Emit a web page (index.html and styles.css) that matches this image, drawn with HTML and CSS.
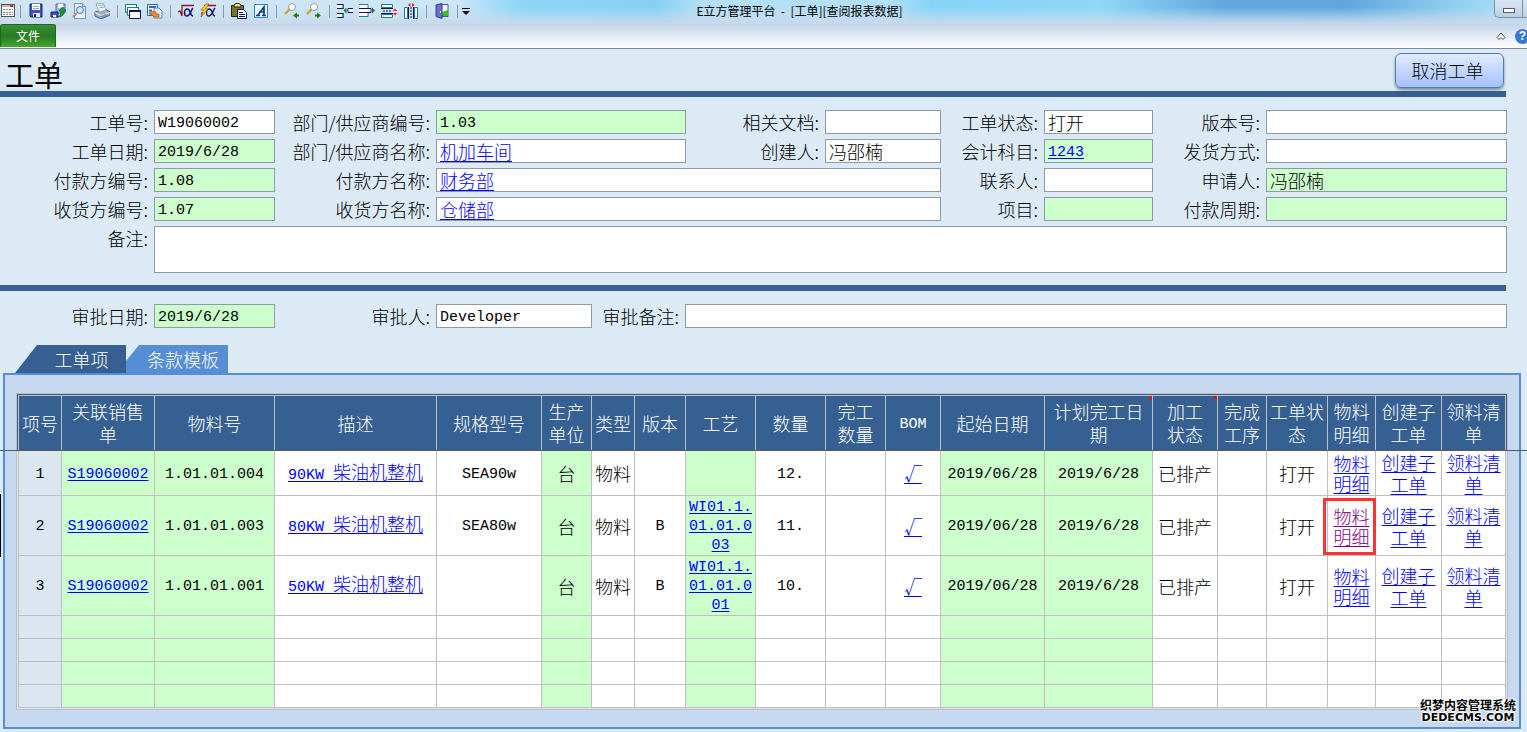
FILE: index.html
```
<!DOCTYPE html>
<html lang="zh-CN">
<head>
    <meta charset="UTF-8">
    <meta name="viewport" content="width=device-width, initial-scale=1.0">
    <title>E立方管理平台</title>
    <link rel="stylesheet" href="styles.css">
</head>
<body>

<header class="titlebar">
    <div class="toolbar">
        <button class="tool first" title="窗口"><svg width="16" height="16" viewBox="0 0 16 16"><rect x="1.500" y="1.500" width="13" height="12" fill="#fff" stroke="#555"/><path d="M2 3h12" stroke="#bbb" stroke-width="2"/><path d="M10 3h3" stroke="#b33" stroke-width="2"/><path d="M3 6.500h10M3 9.500h10M3 11.500h10" stroke="#888" stroke-dasharray="2 1"/></svg></button>
        <i class="sep"></i>
        <button class="tool" title="保存"><svg width="16" height="16" viewBox="0 0 16 16"><path d="M2 1h12v13H3l-1-1z" fill="#3d50c4" stroke="#1b2477"/><path d="M4 1h8v6H4z" fill="#fff"/><path d="M5 3.500h6M5 5.500h6" stroke="#9aa"/><path d="M5 10h7v4H5z" fill="#e4e8f4"/><path d="M6 11h2v3H6z" fill="#1b2477"/></svg></button>
        <button class="tool" title="保存并退出"><svg width="16" height="16" viewBox="0 0 16 16"><path d="M6 1h9v9H6z" fill="#9db4e4" stroke="#5069a8"/><path d="M8 1h5v4H8z" fill="#fff"/><path d="M1 9h7v5H1z" fill="#3d50c4" stroke="#1b2477"/><path d="M3 12h3v2H3z" fill="#fff"/><path d="M7 14c3 0 4-3 4-6H9l3.500-4L16 8h-2c0 4-2 6-7 6z" fill="#15a02a" stroke="#075c12" stroke-width=".7"/></svg></button>
        <button class="tool" title="打印预览"><svg width="16" height="16" viewBox="0 0 16 16"><path d="M2.500.5h8l3 3v12h-11z" fill="#eef5ff" stroke="#6d93d0"/><path d="M10.500.5v3h3" fill="#bcd3f2" stroke="#6d93d0"/><circle cx="8" cy="7" r="3.500" fill="#cfeaff" stroke="#3975b8"/><path d="M5 10l-4 4" stroke="#c78a5a" stroke-width="2"/></svg></button>
        <button class="tool" title="打印"><svg width="16" height="16" viewBox="0 0 16 16"><path d="M1 9l10-3 5 3v3l-9 4-6-3z" fill="#a9adb5" stroke="#555c66"/><path d="M2 1l7-1 3 7-7 2z" fill="#fff" stroke="#8aa"/><path d="M4 3l5-1M5 5l5-1" stroke="#77a2dd"/><path d="M1 9.500l6 3 9-3" fill="none" stroke="#eee"/><path d="M5 14l6-3 3 1-6 3z" fill="#5f9bea"/></svg></button>
        <i class="sep"></i>
        <button class="tool" title="层叠"><svg width="16" height="16" viewBox="0 0 16 16"><g fill="#fff"><path d="M.5 1.500h11v8H.5z" stroke="#188080"/><path d="M2.500 4.500h11v8h-11z" stroke="#188080"/><path d="M4.500 7.500h11v8h-11z" stroke="#10106c"/></g><path d="M0 1.500h12M2 4.500h12" stroke="#188080"/><path d="M4 8h12" stroke="#10106c" stroke-width="2"/></svg></button>
        <button class="tool" title="切换"><svg width="16" height="16" viewBox="0 0 16 16"><path d="M.5 1.500h10v11H.5z" fill="#fff" stroke="#2862ba"/><path d="M2 4h7" stroke="#2862ba" stroke-width="2"/><path d="M2 7.500h3M2 10.500h3" stroke="#2862ba" stroke-width="2"/><path d="M7 5h5l3 3v7H7z" fill="#dbe9ff" stroke="#6482bb"/><path d="M3 8l6 1v2h3v3H7l-4-4z" fill="#f18a20" stroke="#b75306" stroke-width=".6"/></svg></button>
        <i class="sep"></i>
        <button class="tool" title="公式"><svg width="16" height="16" viewBox="0 0 16 16"><path d="M0 9l2-1 2 5V2.500h12" fill="none" stroke="#8c1c1c" stroke-width="1.300"/><path d="M15 5c-2 2-3 8-6 8-2 0-2.500-2-2.500-3.500S7.500 6 9.500 6c3 0 2.500 7 5.500 7" fill="none" stroke="#12127a" stroke-width="1.500"/></svg></button>
        <button class="tool" title="执行公式"><svg width="16" height="16" viewBox="0 0 16 16"><path d="M4 2.500h12M2 12V9" fill="none" stroke="#8c1c1c" stroke-width="1.300"/><path d="M15 5c-2 2-3 8-6 8-2 0-2.500-2-2.500-3.500S7.500 6 9.500 6c3 0 2.500 7 5.500 7" fill="none" stroke="#12127a" stroke-width="1.300"/><path d="M6 1L1 7h3l-3 7 7-8H5l4-5z" fill="#ffe719" stroke="#8f4c10" stroke-width=".7"/></svg></button>
        <i class="sep"></i>
        <button class="tool" title="粘贴"><svg width="16" height="16" viewBox="0 0 16 16"><path d="M.5 2.500h12v11H.5z" fill="#77772a" stroke="#222"/><path d="M3 4h7V2L8 .5H5L3 2z" fill="#ffe65c" stroke="#222"/><path d="M6.500 6.500h6l3 3v6h-9z" fill="#fff" stroke="#10106c"/><path d="M8 9.500h4M8 11.500h6M8 13.500h6" stroke="#10106c"/></svg></button>
        <button class="tool" title="字体"><svg width="16" height="16" viewBox="0 0 16 16"><path d="M1.500 1.500h13v13h-13z" fill="#e8f7ff" stroke="#2589ce"/><path d="M3 12.500h4M9 12.500h4M5 12l6-8v8M6 9h5" fill="none" stroke="#173b79" stroke-width="1.700"/></svg></button>
        <i class="sep"></i>
        <button class="tool" title="查找上一个"><svg width="16" height="16" viewBox="0 0 16 16"><path d="M1 11l5-5" stroke="#c3a000" stroke-width="2"/><circle cx="8" cy="4" r="3.500" fill="#fff" stroke="#999"/><path d="M9 12.500l4-3v2h2v2h-2v2z" fill="#128012"/></svg></button>
        <button class="tool" title="查找下一个"><svg width="16" height="16" viewBox="0 0 16 16"><path d="M1 11l5-5" stroke="#c3a000" stroke-width="2"/><circle cx="8" cy="4" r="3.500" fill="#fff" stroke="#999"/><path d="M15 12.500l-4-3v2H9v2h2v2z" fill="#128012"/></svg></button>
        <i class="sep"></i>
        <button class="tool" title="插入行"><svg width="16" height="16" viewBox="0 0 16 16"><g fill="#fff" stroke="#10106c"><path d="M0 1.500h6v4H0M0 10.500h6v4H0"/><path d="M16 5.500h-5v4h5"/></g><path d="M6.500 7.500l3-3v6z" fill="#178017"/><path d="M6.500 1v5M6.500 10v5" stroke="#188080"/></svg></button>
        <button class="tool" title="删除行"><svg width="16" height="16" viewBox="0 0 16 16"><g fill="#fff" stroke="#188080"><path d="M0 1.500h9v4H0M0 9.500h9v4H0"/></g><path d="M0 5.500h12v4H0" fill="#fff" stroke="#10106c"/><path d="M16 7.500l-3-3v6z" fill="#178017"/></svg></button>
        <button class="tool" title="行高"><svg width="16" height="16" viewBox="0 0 16 16"><path d="M.5 1.500h11v3H.5zM.5 11.500h11v3H.5z" fill="#fff" stroke="#188080"/><path d="M0 5.500h12M0 10.500h12" stroke="#10106c"/><path d="M2 8h9" stroke="#10106c" stroke-dasharray="2 1"/><path d="M12 8l2-2.500L16 8zM12 10l2 2.500 2-2.500z" fill="#f11"/></svg></button>
        <button class="tool" title="列宽"><svg width="16" height="16" viewBox="0 0 16 16"><path d="M1.500 4.500h3v11h-3zM11.500 4.500h3v11h-3z" fill="#fff" stroke="#188080"/><path d="M5.500 4v12M10.500 4v12" stroke="#10106c"/><path d="M8 4v11" stroke="#10106c" stroke-dasharray="2 1"/><path d="M7.500 0L5 2l2.500 2zM9 0l2.500 2L9 4z" fill="#f11"/></svg></button>
        <i class="sep"></i>
        <button class="tool" title="退出"><svg width="16" height="16" viewBox="0 0 16 16"><path d="M5 1.500h9v12H5z" fill="#f1f5ff" stroke="#4952a5"/><path d="M8 9l6-2v6H8z" fill="#3fbd28"/><path d="M2 2l6-1.500v15L2 13.500z" fill="#6972c9" stroke="#353e91"/><path d="M6.500 8v2" stroke="#fff"/></svg></button>
        <i class="sep"></i>
        <button class="more" title="更多"><svg width="8" height="8" viewBox="0 0 8 8"><path d="M0 1.500h8" stroke="#111"/><path d="M0 4h8L4 8z" fill="#111"/></svg></button>
    </div>
    <div class="window-title">E立方管理平台 &nbsp;- &nbsp;[工单][查阅报表数据]</div>
    <div class="window-buttons"><button title="最小化"><span></span></button></div>
</header>

<nav class="ribbon">
    <button class="file-tab">文件</button>
    <div class="ribbon-right">
        <button title="折叠"><svg width="10" height="8" viewBox="0 0 10 8"><path d="M1 5.500L5 1l4 4.500L7 7.500l-2-2-2 2z" fill="#fff" stroke="#444"/></svg></button>
        <button class="help" title="帮助">?</button>
    </div>
</nav>

<main>
    <div class="page-head">
        <h1>工单</h1>
        <button class="cancel">取消工单</button>
    </div>

    <form class="form">
        <label for="no">工单号:</label>
        <input class="mono" id="no" value="W19060002">
        <label for="deptNo">部门/供应商编号:</label>
        <input class="mono green" id="deptNo" value="1.03">
        <label for="doc">相关文档:</label>
        <input id="doc">
        <label for="status">工单状态:</label>
        <input id="status" value="打开">
        <label for="version">版本号:</label>
        <input id="version">

        <label for="date">工单日期:</label>
        <input class="mono green" id="date" value="2019/6/28">
        <span class="label">部门/供应商名称:</span>
        <div class="field"><a href="#">机加车间</a></div>
        <label for="creator">创建人:</label>
        <input id="creator" value="冯邵楠">
        <span class="label">会计科目:</span>
        <div class="field mono green"><a href="#">1243</a></div>
        <label for="ship">发货方式:</label>
        <input id="ship">

        <label for="payNo">付款方编号:</label>
        <input class="mono green" id="payNo" value="1.08">
        <span class="label">付款方名称:</span>
        <div class="field wide"><a href="#">财务部</a></div>
        <label for="contact">联系人:</label>
        <input id="contact">
        <label for="applicant">申请人:</label>
        <input class="green" id="applicant" value="冯邵楠">

        <label for="recvNo">收货方编号:</label>
        <input class="mono green" id="recvNo" value="1.07">
        <span class="label">收货方名称:</span>
        <div class="field wide"><a href="#">仓储部</a></div>
        <label for="project">项目:</label>
        <input class="green" id="project">
        <label for="period">付款周期:</label>
        <input class="green" id="period">

        <label for="remark">备注:</label>
        <textarea id="remark"></textarea>
    </form>

    <form class="form approval">
        <label for="apDate">审批日期:</label>
        <input class="mono green" id="apDate" value="2019/6/28">
        <label for="approver">审批人:</label>
        <input class="mono" id="approver" value="Developer">
        <label for="apRemark">审批备注:</label>
        <input id="apRemark">
    </form>

    <div class="tabs">
        <button class="tab active">工单项</button>
        <button class="tab">条款模板</button>
    </div>

    <section class="panel">
        <div class="frame">
            <table>
                <colgroup>
                    <col class="w43"><col class="w93"><col class="w120"><col class="w162"><col class="w105">
                    <col class="w50"><col class="w43"><col class="w51"><col class="w70"><col class="w70">
                    <col class="w60"><col class="w55"><col class="w104"><col class="w108"><col class="w65">
                    <col class="w49"><col class="w61"><col class="w48"><col class="w66"><col class="w64">
                </colgroup>
                <thead>
                    <tr>
                        <th>项号</th><th>关联销售单</th><th>物料号</th><th>描述</th><th>规格型号</th>
                        <th>生产单位</th><th>类型</th><th>版本</th><th>工艺</th><th>数量</th>
                        <th>完工<br>数量</th><th class="mono">BOM</th><th>起始日期</th><th class="note">计划完工日期</th><th class="note">加工<br>状态</th>
                        <th>完成工序</th><th>工单状态</th><th>物料明细</th><th>创建子工单</th><th>领料清单</th>
                    </tr>
                </thead>
                <tbody>
                    <tr class="short">
                        <td class="mono">1</td><td class="mono"><a href="#">S19060002</a></td><td class="mono">1.01.01.004</td>
                        <td><a href="#"><span class="mono">90KW </span>柴油机整机</a></td><td class="mono">SEA90w</td>
                        <td>台</td><td>物料</td><td></td><td></td><td class="mono">12.</td><td></td>
                        <td><a href="#">√</a></td><td class="mono">2019/06/28</td><td class="mono">2019/6/28</td><td>已排产</td>
                        <td></td><td>打开</td><td class="tight"><a href="#">物料明细</a></td><td><a href="#">创建子工单</a></td><td><a href="#">领料清单</a></td>
                    </tr>
                    <tr>
                        <td class="mono">2</td><td class="mono"><a href="#">S19060002</a></td><td class="mono">1.01.01.003</td>
                        <td><a href="#"><span class="mono">80KW </span>柴油机整机</a></td><td class="mono">SEA80w</td>
                        <td>台</td><td>物料</td><td class="mono">B</td><td class="mono code"><a href="#">WI01.1.01.01.003</a></td><td class="mono">11.</td><td></td>
                        <td><a href="#">√</a></td><td class="mono">2019/06/28</td><td class="mono">2019/6/28</td><td>已排产</td>
                        <td></td><td>打开</td><td class="tight marked"><a class="visited" href="#">物料明细</a></td><td><a href="#">创建子工单</a></td><td><a href="#">领料清单</a></td>
                    </tr>
                    <tr>
                        <td class="mono">3</td><td class="mono"><a href="#">S19060002</a></td><td class="mono">1.01.01.001</td>
                        <td><a href="#"><span class="mono">50KW </span>柴油机整机</a></td><td></td>
                        <td>台</td><td>物料</td><td class="mono">B</td><td class="mono code"><a href="#">WI01.1.01.01.001</a></td><td class="mono">10.</td><td></td>
                        <td><a href="#">√</a></td><td class="mono">2019/06/28</td><td class="mono">2019/6/28</td><td>已排产</td>
                        <td></td><td>打开</td><td class="tight"><a href="#">物料明细</a></td><td><a href="#">创建子工单</a></td><td><a href="#">领料清单</a></td>
                    </tr>
                    <tr class="empty"><td></td><td></td><td></td><td></td><td></td><td></td><td></td><td></td><td></td><td></td><td></td><td></td><td></td><td></td><td></td><td></td><td></td><td></td><td></td><td></td></tr>
                    <tr class="empty"><td></td><td></td><td></td><td></td><td></td><td></td><td></td><td></td><td></td><td></td><td></td><td></td><td></td><td></td><td></td><td></td><td></td><td></td><td></td><td></td></tr>
                    <tr class="empty"><td></td><td></td><td></td><td></td><td></td><td></td><td></td><td></td><td></td><td></td><td></td><td></td><td></td><td></td><td></td><td></td><td></td><td></td><td></td><td></td></tr>
                    <tr class="empty"><td></td><td></td><td></td><td></td><td></td><td></td><td></td><td></td><td></td><td></td><td></td><td></td><td></td><td></td><td></td><td></td><td></td><td></td><td></td><td></td></tr>
                </tbody>
            </table>
        </div>
        <div class="watermark">织梦内容管理系统<b>DEDECMS.COM</b></div>
    </section>
</main>

</body>
</html>
```
FILE: styles.css
```
* {
    box-sizing: border-box;
}

body {
    margin: 0;
    background: #dceaf5;
    color: #000;
    font-family: "Noto Sans CJK SC", "Liberation Mono", sans-serif;
    font-size: 18px;
    font-weight: 300;
    overflow-x: hidden;
}

button, input, textarea {
    font: inherit;
    color: inherit;
    margin: 0;
}

button {
    border: none;
    background: none;
    padding: 0;
}

a {
    color: #0000ff;
    text-underline-offset: 2px;
}

a.visited {
    color: #800080;
}

.mono {
    font-family: "Liberation Mono", monospace;
    font-size: 15px;
}

/* title bar */
.titlebar {
    display: grid;
    grid-template-columns: 1fr auto 1fr;
    align-items: start;
    height: 24px;
    background:
        linear-gradient(rgba(200, 217, 236, 0) 30%, #c8d9ec),
        linear-gradient(90deg, #d3e4f2, #cbe6f7 30%, #8ed6f8 34%, #86d0f5 43%, #b4e0f6 46%, #b4e0f6 58%, #84d4f8 61%, #8ed8f8 72%, #62a8de 80%, #5ea6dc 88%, #9cd8f4 97%, #b8dcf0);
}

.toolbar {
    display: flex;
    align-items: center;
    height: 22px;
}

.tool {
    display: flex;
    justify-content: center;
    width: 22px;
}

.tool.first {
    width: 16px;
}

.sep {
    width: 9px;
    height: 13px;
    background: linear-gradient(#8b9aa8, #8b9aa8) center / 1px 100% no-repeat;
}

.more {
    display: flex;
}

.window-title {
    margin-left: 72px;
    font-size: 12px;
    font-weight: 400;
    line-height: 22px;
}

.window-buttons {
    display: flex;
    justify-content: flex-end;
}

.window-buttons button {
    display: flex;
    justify-content: center;
    width: 33px;
    height: 18px;
    padding: 8px 5px 0 0;
    border: 1px solid #7f93a5;
    border-top: none;
    border-right: none;
    border-radius: 0 0 0 5px;
    background: linear-gradient(90deg, transparent 27px, #7f93a5 27px, #7f93a5 28px, transparent 28px), linear-gradient(#d7e7f3, #bdd0e2);
}

.window-buttons span {
    width: 12px;
    height: 5px;
    border: 1px solid #555d6b;
    background: #fff;
}

.ribbon {
    display: flex;
    justify-content: space-between;
    height: 25px;
    border-bottom: 1px solid #7f8890;
    background: linear-gradient(#c5d4e9, #f3f6fb 80%, #fbfdff);
}

.file-tab {
    width: 56px;
    height: 23px;
    padding-bottom: 2px;
    border: 1px solid #1b6a22;
    border-bottom: none;
    border-radius: 3px 3px 0 0;
    background: linear-gradient(#3b8f35, #257a25 50%, #45a52f);
    color: #fff;
    font-size: 12px;
    font-weight: 400;
}

.ribbon-right {
    display: flex;
    align-items: center;
    gap: 9px;
    margin-right: -3px;
}

.ribbon-right button {
    display: flex;
}

.ribbon-right .help {
    align-items: center;
    justify-content: center;
    width: 15px;
    height: 15px;
    border-radius: 50%;
    background: #3b78cf;
    color: #fff;
    font-family: "Liberation Sans", sans-serif;
    font-size: 12px;
    font-weight: bold;
}

/* page heading */
.page-head {
    display: flex;
    justify-content: space-between;
    align-items: flex-start;
    height: 48px;
    margin-right: 21px;
    padding: 4px 2px 0 5px;
    border-bottom: 6px solid #366092;
}

h1 {
    margin: 0;
    font-size: 29px;
    font-weight: 400;
    line-height: 42px;
}

.cancel {
    width: 109px;
    height: 35px;
    padding: 0 4px 2px 0;
    border: 1px solid #4a7ebb;
    border-radius: 6px;
    background: linear-gradient(#e2ebff, #a5c2ff);
    box-shadow: 0 2px 3px rgba(0, 0, 0, 0.4);
}

/* form */
.form {
    display: grid;
    grid-template-columns: 154px 121fr 161px 250fr 139px 116fr 103px 109fr 113px 241fr;
    grid-template-rows: repeat(4, 24px) 47px;
    row-gap: 5px;
    margin-right: 20px;
    padding: 13px 0 12px;
}

label, .label {
    padding-right: 6px;
    line-height: 24px;
    text-align: right;
    white-space: nowrap;
}

input, textarea, .field {
    width: 100%;
    min-width: 0;
    height: 24px;
    padding: 0 3px;
    border: 1px solid #8e9aa6;
    border-radius: 0;
    background: #fff;
    line-height: 22px;
    outline: none;
}

input.mono, .field.mono {
    padding-top: 2px;
}

.form .green {
    background: #ccffcc;
}

.wide {
    grid-column: span 3;
}

textarea {
    grid-column: 2 / -1;
    height: 47px;
    resize: none;
}

.approval {
    position: relative;
    grid-template-columns: 154px 121fr 161px 156fr 93px 822fr;
    grid-template-rows: 24px;
    margin-top: 6px;
    padding: 13px 0 17px;
}

.approval::before {
    content: "";
    position: absolute;
    top: -6px;
    left: 0;
    right: 1px;
    height: 6px;
    background: #366092;
}

/* tabs */
.tabs {
    display: flex;
    padding-left: 15px;
}

.tab {
    width: 102px;
    height: 28px;
    padding-left: 12px;
    background: #558ed5;
    color: #fff;
    line-height: 28px;
    clip-path: polygon(13px 0, 100% 0, 100% 100%, 0 100%, 0 16px);
}

.tab.active {
    width: 111px;
    padding-left: 22px;
    background: #366092;
    clip-path: polygon(22px 0, 100% 0, 100% 100%, 0 100%);
}

.panel {
    position: relative;
    margin: 0 6px 3px 3px;
    padding: 18px 11px 17px;
    border: 2px solid #558ed5;
    background: #c6d9f1;
}

.frame {
    position: relative;
    padding: 1px;
    border: 1px solid #bfbfbf;
    background: linear-gradient(#366092 56px, #dce6f1 56px);
}

/* frozen pane line under the header */
.frame::after {
    content: "";
    position: absolute;
    top: 56px;
    left: -17px;
    right: -20px;
    height: 1px;
    background: #595959;
}

.frame::before {
    content: "";
    position: absolute;
    top: 100px;
    left: -17px;
    width: 1px;
    height: 63px;
    background: #000;
}

table {
    width: 100%;
    table-layout: fixed;
    border-collapse: separate;
    border-spacing: 0;
    border: 1px solid #bfbfbf;
    border-width: 1px 0 0 1px;
}

th, td {
    padding: 0 2px;
    border: 1px solid #bfbfbf;
    border-width: 0 1px 1px 0;
    text-align: center;
    vertical-align: middle;
    font-weight: 300;
    line-height: 22px;
    word-break: break-all;
}

th {
    height: 55px;
    background: #366092;
    color: #fff;
    line-height: 23px;
}

td {
    height: 60px;
    background: #fff;
}

th.mono, td.mono {
    padding-top: 3px;
}

.short td {
    height: 45px;
}

.empty td {
    height: 23px;
}

td:first-child {
    background: #dce6f1;
}

td:nth-child(2), td:nth-child(3), td:nth-child(6),
td:nth-child(9), td:nth-child(13), td:nth-child(14) {
    background: #ccffcc;
}

.tight {
    line-height: 20px;
}

td.code {
    padding-top: 2px;
    line-height: 19px;
}

.note {
    position: relative;
}

.note::after {
    content: "";
    position: absolute;
    top: 0;
    right: 0;
    border: 2px solid #ff0000;
    border-left-color: transparent;
    border-bottom-color: transparent;
}

.marked {
    position: relative;
}

.marked::after {
    content: "";
    position: absolute;
    inset: 2px -1px 0 -5px;
    border: 3px solid #ff3333;
}

.w43 { width: 43px; }
.w48 { width: 48px; }
.w49 { width: 49px; }
.w50 { width: 50px; }
.w51 { width: 51px; }
.w55 { width: 55px; }
.w60 { width: 60px; }
.w61 { width: 61px; }
.w64 { width: 64px; }
.w65 { width: 65px; }
.w66 { width: 66px; }
.w70 { width: 70px; }
.w93 { width: 93px; }
.w104 { width: 104px; }
.w105 { width: 105px; }
.w108 { width: 108px; }
.w120 { width: 120px; }
.w162 { width: 162px; }

.watermark {
    position: absolute;
    right: 3px;
    bottom: 4px;
    font-size: 12px;
    font-weight: bold;
    line-height: 14px;
    text-align: center;
    text-shadow: 1px 0 #fff, -1px 0 #fff, 0 1px #fff, 0 -1px #fff, 0 0 3px #fff;
}

.watermark b {
    display: block;
    font-family: "DejaVu Sans", sans-serif;
    font-size: 11px;
    line-height: 11px;
}
```
